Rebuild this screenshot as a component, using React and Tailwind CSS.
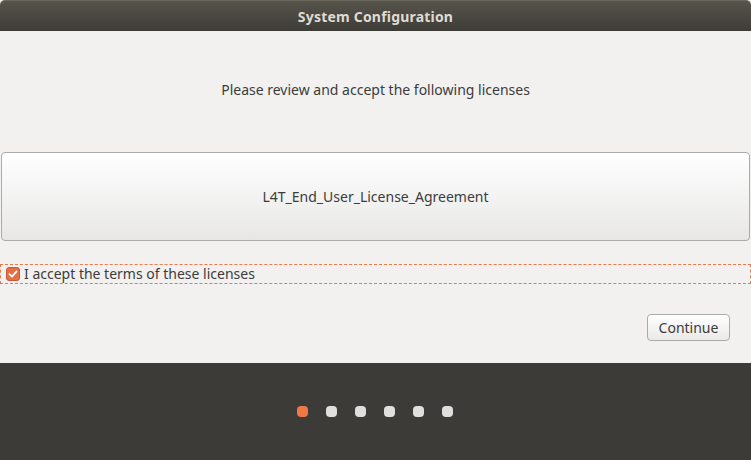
import React, { useState } from 'react';

const App = () => {
  const [accepted, setAccepted] = useState(true);
  const steps = [0, 1, 2, 3, 4, 5];

  return (
    <div
      className="w-[751px] h-[460px] flex flex-col bg-[#f2f1f0] text-[#3c3c3c] overflow-hidden"
      style={{ fontFamily: '"Noto Sans", "Open Sans", sans-serif' }}
    >
      {/* Title bar */}
      <div className="h-[31px] shrink-0 flex items-center justify-center rounded-t-[5px] bg-gradient-to-b from-[#57544b] to-[#3d3c37] border-t border-[#6a675d]">
        <span className="text-[14px] font-bold text-[#dfdbd2] tracking-[0.2px]">System Configuration</span>
      </div>

      {/* Content */}
      <div className="h-[332px] shrink-0 flex flex-col">
        <p className="mt-[49px] text-center text-[14px] leading-[20px]">
          Please review and accept the following licenses
        </p>

        <button className="mt-[52px] mx-[1px] h-[89px] rounded-[4px] border border-[#ababab] bg-gradient-to-b from-[#ffffff] to-[#e8e7e6] text-[14px] text-[#3c3c3c]">
          L4T_End_User_License_Agreement
        </button>

        <label className="mt-[23px] mx-0 h-[20px] flex items-center gap-[4px] border border-dashed border-[#f07746] pl-[5px] cursor-pointer">
          <span
            onClick={() => setAccepted(!accepted)}
            className={`w-[14px] h-[14px] rounded-[3px] flex items-center justify-center ${accepted ? 'bg-[#e86f45] border border-[#c85a35]' : 'bg-white border border-[#999]'}`}
          >
            {accepted && (
              <svg width="10" height="10" viewBox="0 0 10 10">
                <path d="M1.5 5.2 L4 7.6 L8.6 2.4" fill="none" stroke="#fff" strokeWidth="1.8" strokeLinecap="round" strokeLinejoin="round" />
              </svg>
            )}
          </span>
          <span className="text-[14px] leading-[18px]">I accept the terms of these licenses</span>
        </label>

        <div className="mt-[30px] flex justify-end pr-[21px]">
          <button className="w-[83px] h-[27px] rounded-[4px] border border-[#ababab] bg-gradient-to-b from-[#ffffff] to-[#eae9e8] text-[14px] text-[#3c3c3c]">
            Continue
          </button>
        </div>
      </div>

      {/* Footer with progress dots */}
      <div className="flex-1 bg-[#3c3b37] flex items-center justify-center gap-[18px] pb-[1px] pr-[2px]">
        {steps.map(i => (
          <span
            key={i}
            className={`w-[11px] h-[11px] rounded-[4px] ${i === 0 ? 'bg-[#f07746]' : 'bg-[#dfdfdd]'}`}
          />
        ))}
      </div>
    </div>
  );
};

export default App;
